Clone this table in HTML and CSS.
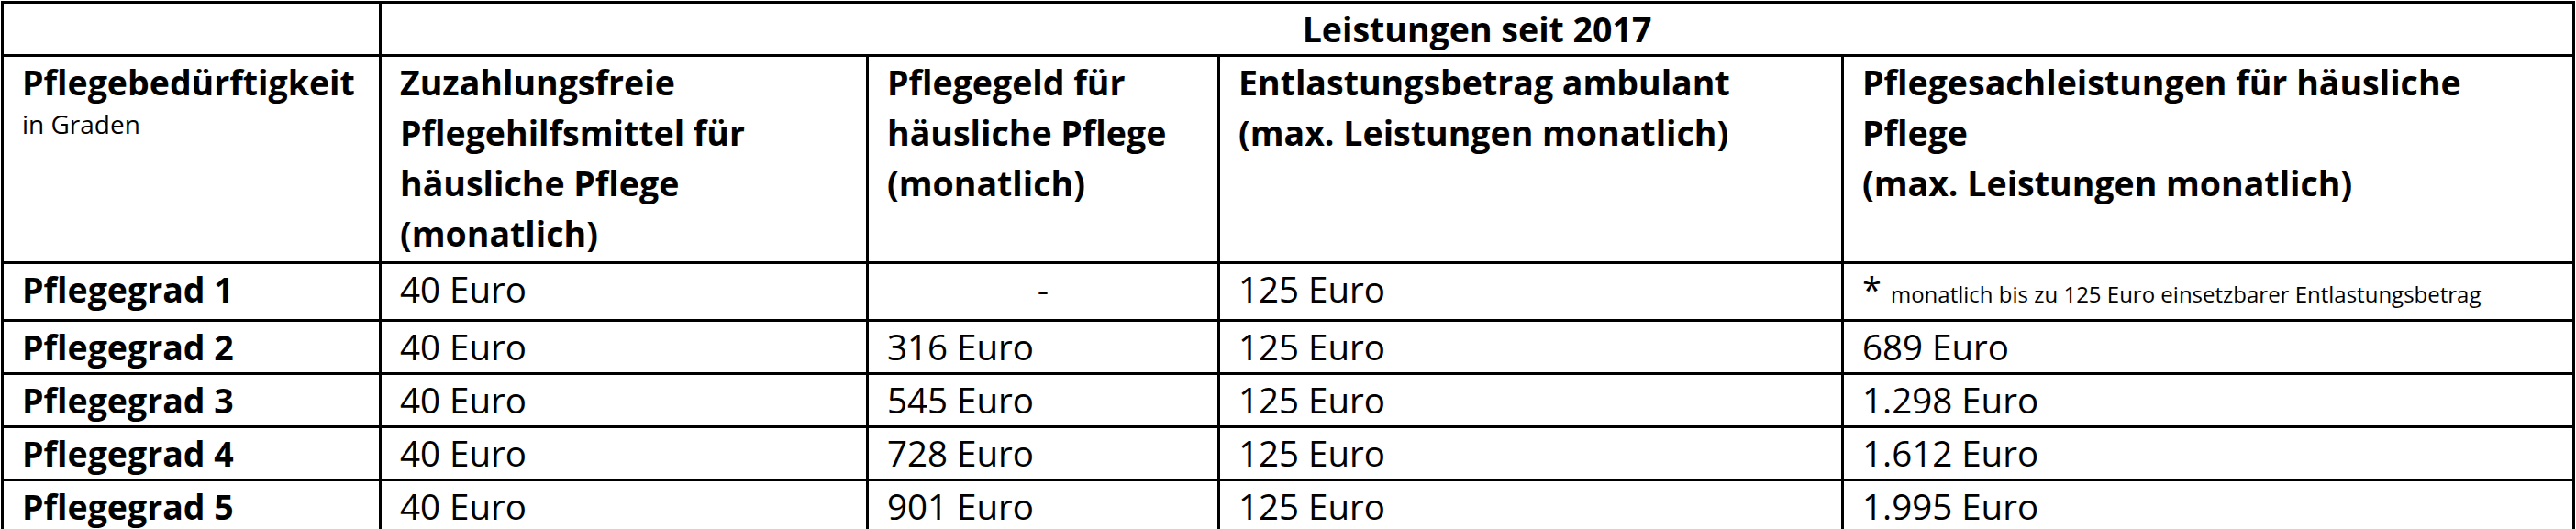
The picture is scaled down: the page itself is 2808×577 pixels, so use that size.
FILE: index.html
```html
<!DOCTYPE html>
<html lang="de">
<head>
<meta charset="utf-8">
<title>Leistungen seit 2017</title>
<link rel="stylesheet" href="styles.css">
</head>
<body>
<table class="grid">
  <colgroup>
    <col class="c1"><col class="c2"><col class="c3"><col class="c4"><col class="c5">
  </colgroup>
  <tr class="top">
    <td></td>
    <td class="b center" colspan="4">Leistungen seit 2017</td>
  </tr>
  <tr class="head">
    <td class="b">Pflegebedürftigkeit<div class="note">in Graden</div></td>
    <td class="b">Zuzahlungsfreie<br>Pflegehilfsmittel für<br>häusliche Pflege<br>(monatlich)</td>
    <td class="b">Pflegegeld für<br>häusliche Pflege<br>(monatlich)</td>
    <td class="b">Entlastungsbetrag ambulant<br>(max. Leistungen monatlich)</td>
    <td class="b">Pflegesachleistungen für häusliche<br>Pflege<br>(max. Leistungen monatlich)</td>
  </tr>
  <tr>
    <td class="b">Pflegegrad 1</td>
    <td>40 Euro</td>
    <td class="center">-</td>
    <td>125 Euro</td>
    <td><span class="star">*</span> <span class="small">monatlich bis zu 125 Euro einsetzbarer Entlastungsbetrag</span></td>
  </tr>
  <tr>
    <td class="b">Pflegegrad 2</td>
    <td>40 Euro</td>
    <td>316 Euro</td>
    <td>125 Euro</td>
    <td>689 Euro</td>
  </tr>
  <tr>
    <td class="b">Pflegegrad 3</td>
    <td>40 Euro</td>
    <td>545 Euro</td>
    <td>125 Euro</td>
    <td>1.298 Euro</td>
  </tr>
  <tr>
    <td class="b">Pflegegrad 4</td>
    <td>40 Euro</td>
    <td>728 Euro</td>
    <td>125 Euro</td>
    <td>1.612 Euro</td>
  </tr>
  <tr>
    <td class="b">Pflegegrad 5</td>
    <td>40 Euro</td>
    <td>901 Euro</td>
    <td>125 Euro</td>
    <td>1.995 Euro</td>
  </tr>
</table>
</body>
</html>
```

FILE: styles.css
```css
html, body {
  margin: 0;
  padding: 0;
  background: #ffffff;
}
body {
  padding: 1px 0 0 1px;
  font-family: "Open Sans", Lato, sans-serif;
  color: #000000;
}
.grid {
  border-collapse: separate;
  border-spacing: 0;
  table-layout: fixed;
  width: 2806px;
  border-top: 3px solid #000;
  border-left: 3px solid #000;
}
.c1 { width: 412px; }
.c2 { width: 531px; }
.c3 { width: 383px; }
.c4 { width: 680px; }
.c5 { width: 797px; }
.grid td {
  border-right: 3px solid #000;
  border-bottom: 3px solid #000;
  padding: 0 0 0 20px;
  font-size: 38.5px;
  line-height: 55px;
  vertical-align: top;
  white-space: nowrap;
  overflow: hidden;
}
.grid td.b {
  font-weight: 700;
  font-size: 37.5px;
}
.grid td.center { text-align: center; padding-left: 0; }
.head td { padding-bottom: 3px; }
.small {
  font-size: 24px;
  font-weight: 400;
}
.note {
  font-size: 28px;
  font-weight: 400;
  line-height: 34px;
  margin-top: 1px;
}
.star {
  font-size: 38px;
}
```
